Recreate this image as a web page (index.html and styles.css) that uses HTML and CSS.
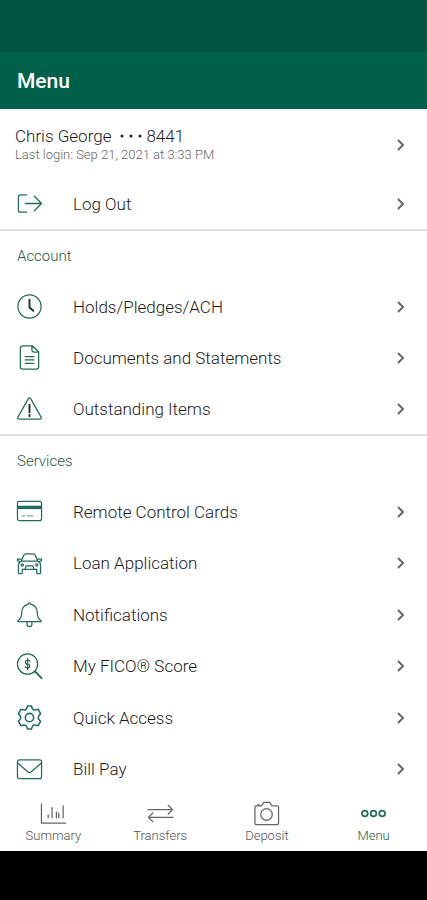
FILE: index.html
```html
<!DOCTYPE html>
<html lang="en">
<head>
<meta charset="utf-8">
<meta name="viewport" content="width=device-width, initial-scale=1">
<title>Menu</title>
<link rel="stylesheet" href="styles.css">
</head>
<body>
<svg class="sprite" aria-hidden="true">
  <symbol id="chevron" viewBox="0 0 12 14"><path d="M3 2l5 5-5 5"/></symbol>
</svg>
<header class="top">
  <div class="status"></div>
  <h1 class="title">Menu</h1>
</header>
<main class="content">
  <section class="section profile">
    <a class="user" href="#">
      <span class="who">
        <span class="name"><span>Chris George</span><span class="account"><svg class="dots" viewBox="0 0 24 12"><circle cx="3" cy="6" r="1.500"/><circle cx="12" cy="6" r="1.500"/><circle cx="21" cy="6" r="1.500"/></svg>8441</span></span>
        <span class="login">Last login: Sep 21, 2021 at 3:33 PM</span>
      </span>
      <svg class="chevron"><use href="#chevron"/></svg>
    </a>
    <a class="row" href="#">
      <svg class="icon" viewBox="0 0 28 28"><path d="M11 5H5q-2.500 0-2.500 2.500v14Q2.500 23 5 23h6M10 14h16M19 6.500l7.500 7.500-7.500 7.500"/></svg>
      <span class="label">Log Out</span>
      <svg class="chevron"><use href="#chevron"/></svg>
    </a>
  </section>
  <section class="section">
    <h2 class="heading">Account</h2>
    <nav class="list">
      <a class="row" href="#">
        <svg class="icon" viewBox="0 0 28 28"><circle cx="14" cy="14" r="12"/><path class="dark" d="M14 7v8l4 3.500"/></svg>
        <span class="label">Holds/Pledges/ACH</span>
        <svg class="chevron"><use href="#chevron"/></svg>
      </a>
      <a class="row" href="#">
        <svg class="icon" viewBox="0 0 28 28"><path d="M17 2H7Q4.500 2 4.500 4.500v19Q4.500 26 7 26h14q2.500 0 2.500-2.500V8zM16.500 2.500V6q0 2.500 2.500 2.500h4M9.500 13h9M9.500 16.500h9M9.500 20h9"/></svg>
        <span class="label">Documents and Statements</span>
        <svg class="chevron"><use href="#chevron"/></svg>
      </a>
      <a class="row" href="#">
        <svg class="icon" viewBox="0 0 28 28"><path d="M12.800 3.800q1.200-1.600 2.400 0L26 23q.8 2-1.500 2h-21Q1.200 25 2 23z"/><path class="dark" d="M14 10v8M14 20.500v1.500"/></svg>
        <span class="label">Outstanding Items</span>
        <svg class="chevron"><use href="#chevron"/></svg>
      </a>
    </nav>
  </section>
  <section class="section services">
    <h2 class="heading">Services</h2>
    <nav class="list">
      <a class="row" href="#">
        <svg class="icon" viewBox="0 0 28 28"><rect x="1.500" y="3.500" width="25" height="20" rx="2"/><path class="solid" d="M2 8h24v3.500H2z"/><path class="fine" d="M6.500 18.500h2.500M11.500 18.500h6"/></svg>
        <span class="label">Remote Control Cards</span>
        <svg class="chevron"><use href="#chevron"/></svg>
      </a>
      <a class="row" href="#">
        <svg class="icon" viewBox="0 0 28 28"><path d="M5.500 11.500l2.500-6Q8.700 4 10.500 4h7q1.800 0 2.500 1.500l2.500 6M5.500 11.500h17q3 1 3 4.500v7.500q0 1-1 1h-2q-1 0-1-1V20h-15v3.500q0 1-1 1h-2q-1 0-1-1V16q0-3.500 3-4.500zM5 9.500H1.500V11L4 12M23 9.500h3.500V11L24 12M9.500 19.500l1-3h7l1 3"/><circle cx="6.500" cy="15.500" r="1.200"/><circle cx="21.500" cy="15.500" r="1.200"/></svg>
        <span class="label">Loan Application</span>
        <svg class="chevron"><use href="#chevron"/></svg>
      </a>
      <a class="row" href="#">
        <svg class="icon" viewBox="0 0 28 28"><path d="M12.500 3.500a1.500 1.500 0 0 1 3 0q6.500 1.300 6.500 8.500 0 6 4 8.500v1H2v-1q4-2.500 4-8.500 0-7.200 6.500-8.500zM11.500 22v2a2.500 2.500 0 0 0 5 0v-2"/></svg>
        <span class="label">Notifications</span>
        <svg class="chevron"><use href="#chevron"/></svg>
      </a>
      <a class="row" href="#">
        <svg class="icon" viewBox="0 0 28 28"><circle cx="12" cy="11.500" r="10.500"/><path d="M14.500 8.500Q13.500 7.500 12 7.500q-2.200 0-2.200 2t2.200 2 2.200 2-2.200 2q-1.500 0-2.500-1M12 6v11"/><path class="handle" d="M20 19.500l6.500 6.500"/></svg>
        <span class="label">My FICO® Score</span>
        <svg class="chevron"><use href="#chevron"/></svg>
      </a>
      <a class="row" href="#">
        <svg class="icon gear" viewBox="0 0 28 28"><path d="M12 2h4q1 3.500 2 4 1.500.8 5-.5l2.500 4.500q-2.500 2.500-2.500 4t2.500 4L23 22.500q-3.500-1.200-5-.5-1 .5-2 4h-4q-1-3.500-2-4-1.500-.7-5 .5L2.500 18Q5 15.500 5 14t-2.500-4L5 5.500q3.500 1.300 5 .5 1-.5 2-4z"/><circle cx="14" cy="14" r="4.300"/></svg>
        <span class="label">Quick Access</span>
        <svg class="chevron"><use href="#chevron"/></svg>
      </a>
      <a class="row" href="#">
        <svg class="icon" viewBox="0 0 28 28"><rect x="1.500" y="4" width="25" height="19.500" rx="2"/><path d="M2 7.500l10.500 9q1.500 1.300 3 0L26 7.500"/></svg>
        <span class="label">Bill Pay</span>
        <svg class="chevron"><use href="#chevron"/></svg>
      </a>
    </nav>
  </section>
</main>
<nav class="tabs">
  <a class="tab" href="#"><svg class="icon" viewBox="0 0 28 28"><path d="M1.500 4v20h25M8.500 18.500v-3M12.500 18.500V8M17 18.500v-6M19.500 18.500v-5M24 18.500V6"/></svg>Summary</a>
  <a class="tab" href="#"><svg class="icon" viewBox="0 0 28 28"><path d="M1 10h25M22 5.500l4.500 4.500-4.500 4.500M27 18H2M6 13.500L1.500 18l4.500 4.500"/></svg>Transfers</a>
  <a class="tab" href="#"><svg class="icon" viewBox="0 0 28 28"><path d="M9 6l2-3.500h6.500L19.500 6H25q1.500 0 1.500 1.500V24q0 1.500-1.500 1.500H3.500Q2 25.500 2 24V7.500Q2 6 3.500 6z"/><circle cx="14" cy="15" r="6"/><path d="M4.500 5h2"/></svg>Deposit</a>
  <a class="tab current" href="#" aria-current="page"><svg class="icon" viewBox="0 0 28 28"><circle cx="5" cy="14" r="3"/><circle cx="14" cy="14" r="3"/><circle cx="23" cy="14" r="3"/></svg>Menu</a>
</nav>
<footer class="system"></footer>
</body>
</html>
```
FILE: styles.css
```css
* { box-sizing: border-box; }

body {
  margin: 0;
  min-height: 100vh;
  display: flex;
  flex-direction: column;
  background: #fff;
  color: #1c1c1c;
  font-family: Roboto, "Liberation Sans", sans-serif;
  font-size: 17px;
  font-weight: 300;
  line-height: 20px;
}

a { color: inherit; text-decoration: none; }

.sprite { position: absolute; width: 0; height: 0; }

.top { background: #00604a; color: #fff; }
.status { height: 52px; background: #005642; }
.title {
  margin: 0;
  padding: 17px 17px 16px;
  font-size: 21px;
  font-weight: 500;
  line-height: 24px;
}

.content { flex: 1; display: flex; flex-direction: column; }

.section + .section { border-top: 2px solid #dedede; }

.user {
  display: flex;
  align-items: center;
  justify-content: space-between;
  padding: 17px 20px 14px 15px;
}
.who { display: flex; flex-direction: column; }
.name { display: flex; gap: 8px; }
.account { display: flex; align-items: center; gap: 3px; }
.dots { width: 24px; height: 12px; fill: #222; }
.login { color: #666; font-size: 13px; line-height: 18px; }

.row {
  display: flex;
  align-items: center;
  min-height: 51px;
  padding: 0 20px 0 16px;
  flex: 1;
}
.label { flex: 1; margin-left: 30px; }

.heading {
  margin: 0;
  padding: 15px 17px;
  color: #1f5a49;
  font-size: 15px;
  font-weight: 300;
  line-height: 20px;
}
.list { display: flex; flex-direction: column; }
.services { flex: 1; display: flex; flex-direction: column; }
.services .list { flex: 1; }

.icon {
  width: 27px;
  height: 27px;
  fill: none;
  stroke: #236e58;
  stroke-width: 1.3;
  stroke-linecap: round;
  stroke-linejoin: round;
}
.icon .dark { stroke: #12372c; stroke-width: 2; }
.icon .solid { fill: #236e58; stroke: none; }
.icon .fine { stroke: #7fa598; }
.icon .handle { stroke-width: 2; }
.icon.gear { stroke-width: 1.6; }

.chevron {
  width: 12px;
  height: 14px;
  fill: none;
  stroke: #666;
  stroke-width: 2;
}

.tabs { display: grid; grid-template-columns: repeat(4, 1fr); padding: 5px 0 6px; }
.tab {
  display: flex;
  flex-direction: column;
  align-items: center;
  color: #555;
  font-size: 13px;
  line-height: 18px;
}
.tab .icon { stroke: #666; }
.tab.current { color: #1f5a49; }
.tab.current .icon { stroke: #236e58; stroke-width: 1.8; }

.system { height: 49px; background: #000; }
```
